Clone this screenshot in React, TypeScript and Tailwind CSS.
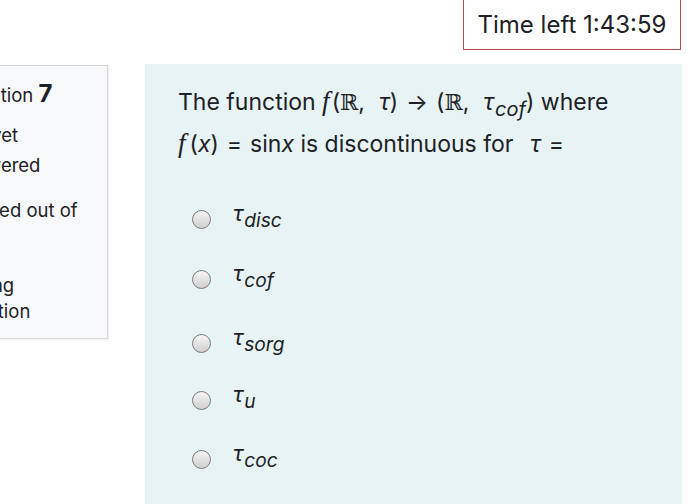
function Tau({ sub }: { sub?: string }) {
  return (
    <span className="whitespace-nowrap">
      <span className="italic">τ</span>
      {sub && <span className="relative top-[0.3em] ml-[1px] text-[0.87em] italic">{sub}</span>}
    </span>
  );
}

function Radio() {
  return (
    <span className="block h-[19px] w-[19px] shrink-0 rounded-full border-[1.5px] border-[#7a7a7a] bg-gradient-to-b from-[#f6f6f6] to-[#cfcfcf]" />
  );
}

const R = () => <span className="font-['DejaVu_Serif',serif] text-[22px]">ℝ</span>;
const F = ({ gap = "mr-[2px]" }: { gap?: string }) => (
  <span className={`${gap} font-['Liberation_Serif',serif] text-[27px] italic`}>f</span>
);

const options = [
  { sub: "disc", h: "h-[60px]" },
  { sub: "cof", h: "h-[64px]" },
  { sub: "sorg", h: "h-[57px]" },
  { sub: "u", h: "h-[59px]" },
  { sub: "coc", h: "h-[60px]" },
];

export default function App() {
  return (
    <div className="h-[504px] w-[700px] overflow-hidden bg-white font-['Inter',sans-serif] text-[#1d2125]">
      <div className="flex justify-end pr-[19px]">
        <div className="-mt-[2px] flex h-[52px] w-[218px] items-center justify-center border-[1.5px] border-[#b3504c] pt-[2px] text-[24px]">
          Time left 1:43:59
        </div>
      </div>

      <div className="mt-[14px] flex items-start">
        {/* question info, cut off at the left edge */}
        <div className="-ml-[60px] mt-[1px] h-[274px] w-[168px] overflow-hidden border border-[#d6d8db] bg-[#f8f9fa] pl-[14px] pt-[15px] text-[18.5px] leading-[26px] shadow-[1px_1px_2px_rgba(0,0,0,0.08)]">
          <div className="whitespace-nowrap">
            Question <span className="text-[24px] font-bold leading-[26px]">7</span>
          </div>
          <div className="mt-[14px] whitespace-nowrap">Not yet</div>
          <div className="mt-[4px] whitespace-nowrap">answered</div>
          <div className="mt-[19px] whitespace-nowrap">Marked out of</div>
          <div className="whitespace-nowrap">1.00</div>
          <div className="mt-[23px] flex items-center gap-[6px] whitespace-nowrap">
            <span className="block h-[16px] w-[16px]" />
            Flag
          </div>
          <div className="whitespace-nowrap">question</div>
        </div>

        {/* formulation */}
        <div className="ml-[37px] h-[450px] w-[537px] bg-[#e7f3f5] pl-[33px] pt-[17px]">
          <p className="whitespace-nowrap text-[23px] leading-[40px]">
            The function <F />(<R />,<span className="ml-[14px]"><Tau /></span>)
            <span className="mx-[8px]">→</span>(<R />,<span className="ml-[14px]"><Tau sub="cof" /></span>) where
            <br />
            <F gap="mr-[4px]" />(<span className="italic">x</span>)<span className="mx-[8px]">=</span>sin
            <span className="italic">x</span> is discontinuous for <span className="ml-[10px]"><Tau /></span>
            <span className="ml-[8px]">=</span>
          </p>

          <div className="mt-[46px] flex flex-col">
            {options.map((o) => (
              <label key={o.sub} className={`${o.h} flex items-start gap-[22px] pl-[14px]`}>
                <Radio />
                <span className="-mt-[13px] text-[22px]">
                  <Tau sub={o.sub} />
                </span>
              </label>
            ))}
          </div>
        </div>
      </div>
    </div>
  );
}
